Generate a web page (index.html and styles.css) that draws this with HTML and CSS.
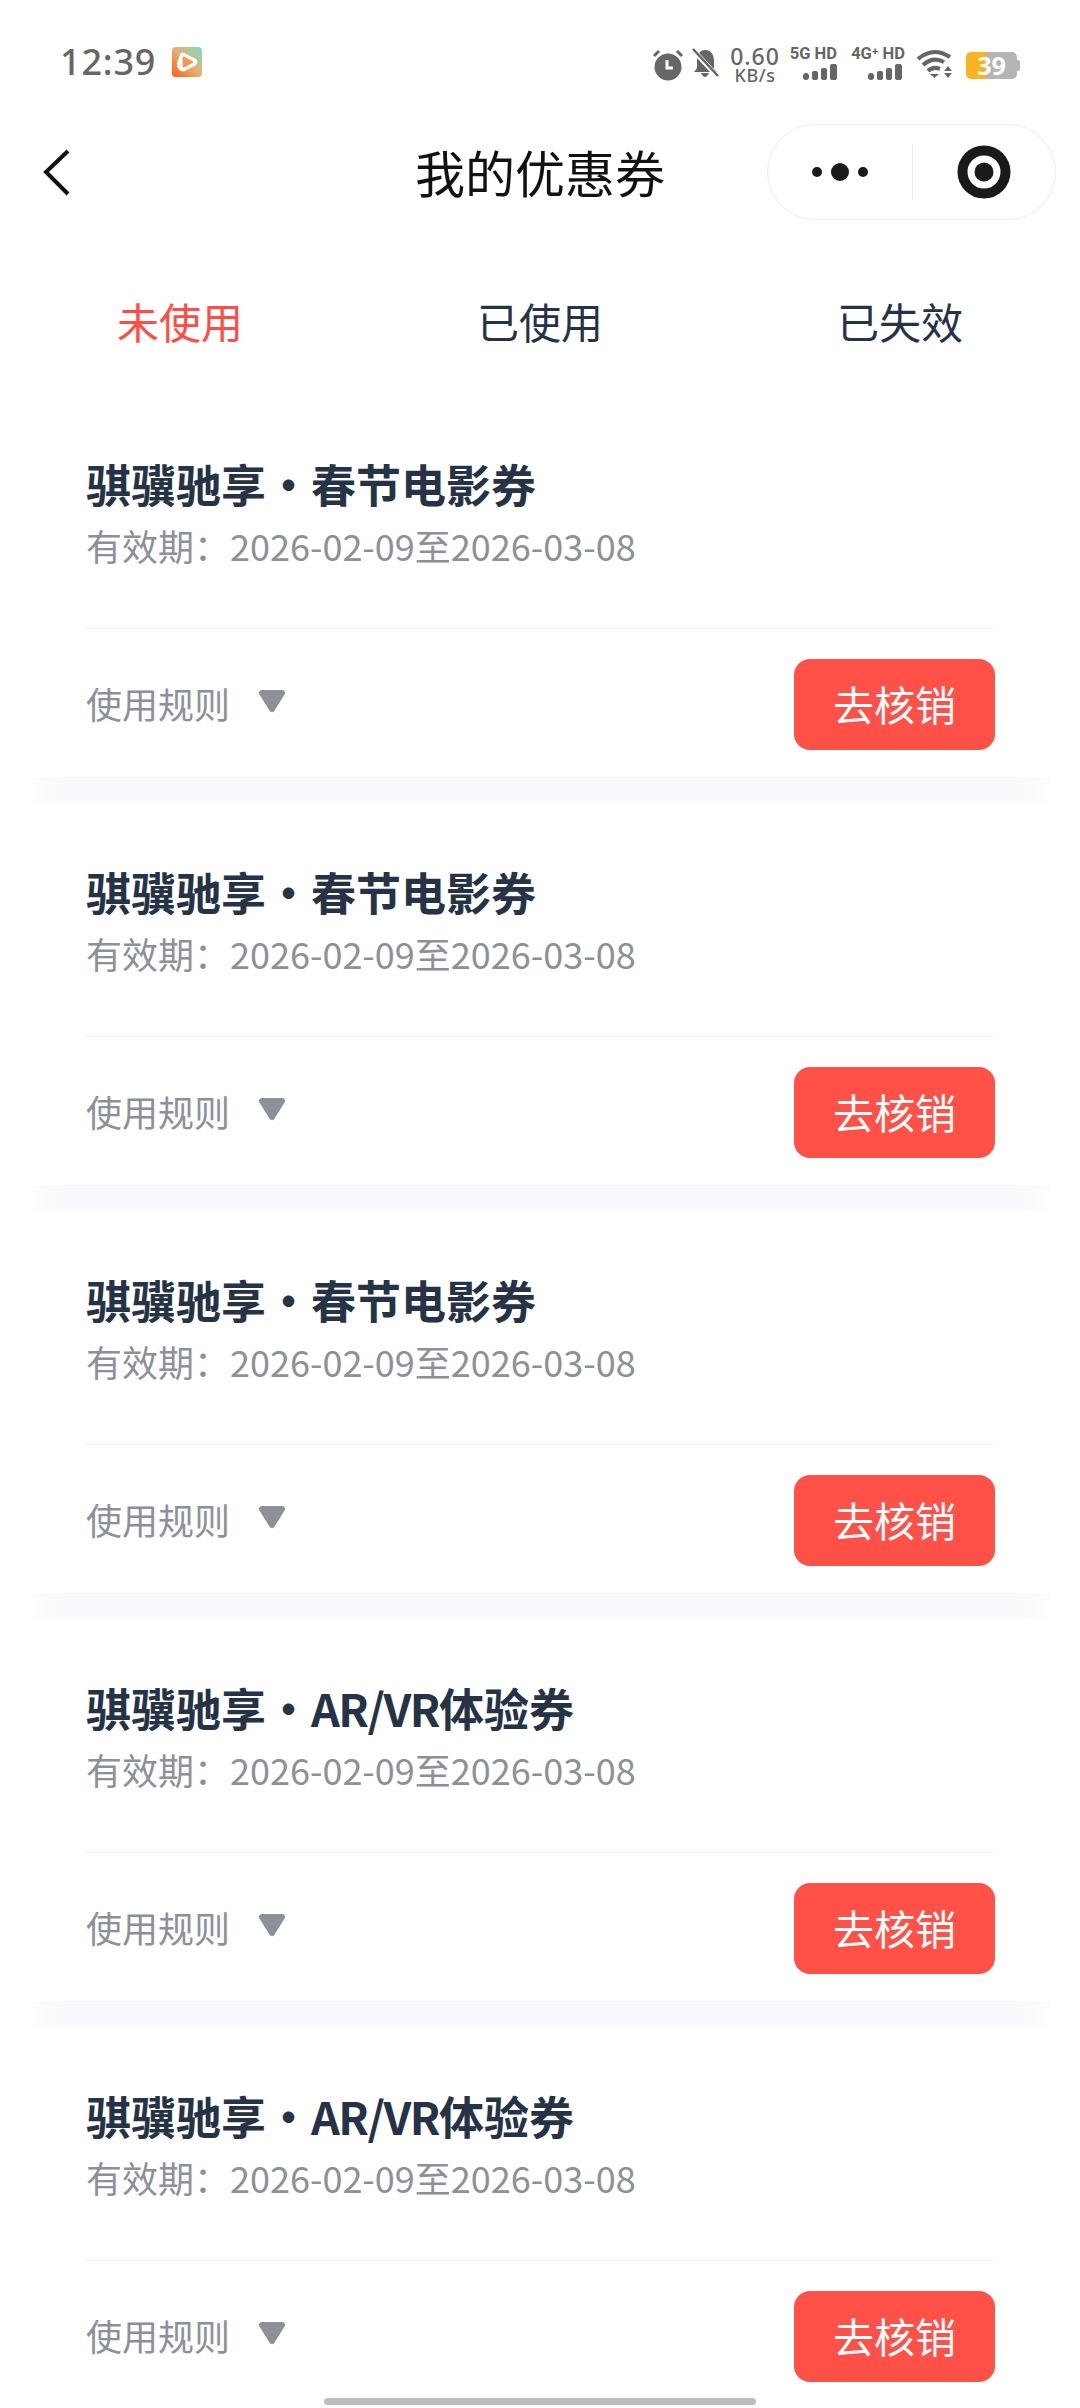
FILE: index.html
```html
<!DOCTYPE html>
<html lang="zh-CN">
<head>
    <meta charset="UTF-8">
    <meta name="viewport" content="width=device-width, initial-scale=1.0">
    <title>我的优惠券</title>
    <link rel="stylesheet" href="styles.css">
</head>
<body>
    <div class="page">
        <div class="status">
            <div class="status-left">
                <span class="time">12:39</span>
                <svg class="app-icon" width="30" height="30" viewBox="0 0 30 30">
                    <defs>
                        <linearGradient id="appBg" x1="1" y1="0" x2="0" y2="1">
                            <stop offset="0" stop-color="#6fe0c8"/>
                            <stop offset="0.5" stop-color="#e8b070"/>
                            <stop offset="1" stop-color="#ff5a10"/>
                        </linearGradient>
                    </defs>
                    <rect width="30" height="30" rx="4" fill="url(#appBg)"/>
                    <path d="M8 8 Q8 5 11 5.500 L24 12 Q27 15 24 18 L12 24.500 Q5 25 5 16 Z" fill="#fff"/>
                    <path d="M11.500 10.500 L20 15 L11.500 19.500 Z" fill="#f09a50" stroke="#f09a50" stroke-width="2" stroke-linejoin="round"/>
                </svg>
            </div>
            <div class="status-right">
                <svg class="alarm" width="30" height="32" viewBox="0 0 30 32">
                    <circle cx="15" cy="18" r="13.500" fill="#666"/>
                    <path d="M14 11 V19 H20" fill="none" stroke="#fff" stroke-width="3"/>
                    <path d="M1 7 L6 2 M29 7 L24 2" stroke="#666" stroke-width="3"/>
                </svg>
                <svg class="bell" width="28" height="30" viewBox="0 0 28 30">
                    <path d="M14 2 C21 2 23 8 23 13 V21 L26 24 H3 L6 20 V10 C7 5 10 2 14 2 Z M10 25 H18 Q16 29 14 29 Q12 29 10 25 Z" fill="#666"/>
                    <path d="M1 1 L27 29" stroke="#fff" stroke-width="5"/>
                    <path d="M2 1 L27 28" stroke="#666" stroke-width="2.500"/>
                </svg>
                <div class="speed">
                    <span class="speed-num">0.60</span>
                    <span class="speed-unit">KB/s</span>
                </div>
                <div class="net net-5g">
                    <span class="net-label">5G HD</span>
                    <svg width="34" height="17" viewBox="0 0 34 17">
                        <rect x="0" y="9" width="6" height="7" rx="3" fill="#666"/>
                        <rect x="9" y="7" width="6" height="9" rx="2" fill="#666"/>
                        <rect x="18" y="4" width="6" height="12" rx="2" fill="#666"/>
                        <rect x="27" y="0" width="7" height="16" rx="2" fill="#666"/>
                    </svg>
                </div>
                <div class="net net-4g">
                    <span class="net-label">4G⁺ HD</span>
                    <svg width="34" height="17" viewBox="0 0 34 17">
                        <rect x="0" y="9" width="6" height="7" rx="3" fill="#666"/>
                        <rect x="9" y="7" width="6" height="9" rx="2" fill="#666"/>
                        <rect x="18" y="4" width="6" height="12" rx="2" fill="#666"/>
                        <rect x="27" y="0" width="7" height="16" rx="2" fill="#666"/>
                    </svg>
                </div>
                <svg class="wifi" width="38" height="30" viewBox="0 0 38 30">
                    <path d="M2 10 Q17 -3 34 8" fill="none" stroke="#666" stroke-width="4"/>
                    <path d="M7 16 Q17 7 28 13" fill="none" stroke="#666" stroke-width="4"/>
                    <path d="M12 22 Q17 17 24 20" fill="none" stroke="#666" stroke-width="4"/>
                    <path d="M14 25 H23 L18.500 29 Z" fill="#666"/>
                    <path d="M32 17 L36 22 H28 Z M28 24 H36 L32 29 Z" fill="#666"/>
                </svg>
                <div class="battery">
                    <div class="battery-body"><span class="battery-num">39</span></div>
                    <div class="battery-tip"></div>
                </div>
            </div>
        </div>

        <div class="nav">
            <svg class="back" width="28" height="48" viewBox="0 0 28 48">
                <path d="M25 3 L3 24 L25 46" fill="none" stroke="#111" stroke-width="4"/>
            </svg>
            <div class="nav-title">我的优惠券</div>
            <div class="capsule">
                <div class="capsule-part capsule-more">
                    <svg width="60" height="24" viewBox="0 0 60 24">
                        <circle cx="7" cy="12" r="5" fill="#1a1a1a"/>
                        <circle cx="30" cy="12" r="9" fill="#1a1a1a"/>
                        <circle cx="53" cy="12" r="5" fill="#1a1a1a"/>
                    </svg>
                </div>
                <div class="capsule-part capsule-close">
                    <svg width="54" height="54" viewBox="0 0 54 54">
                        <circle cx="27" cy="27" r="21.500" fill="none" stroke="#1a1a1a" stroke-width="10"/>
                        <circle cx="27" cy="27" r="9.500" fill="#1a1a1a"/>
                    </svg>
                </div>
            </div>
        </div>

        <div class="tabs">
            <div class="tab active">未使用</div>
            <div class="tab">已使用</div>
            <div class="tab">已失效</div>
        </div>

        <div class="card">
            <div class="card-title">骐骥驰享・春节电影券</div>
            <div class="card-date">有效期：2026-02-09至2026-03-08</div>
            <div class="card-foot">
                <div class="rule">使用规则
                    <svg class="arrow" width="28" height="24" viewBox="0 0 28 24"><path d="M4 4 H24 L14 20 Z" fill="#8e9099" stroke="#8e9099" stroke-width="6" stroke-linejoin="round"/></svg>
                </div>
                <button class="use-btn">去核销</button>
            </div>
        </div>
        <div class="card">
            <div class="card-title">骐骥驰享・春节电影券</div>
            <div class="card-date">有效期：2026-02-09至2026-03-08</div>
            <div class="card-foot">
                <div class="rule">使用规则
                    <svg class="arrow" width="28" height="24" viewBox="0 0 28 24"><path d="M4 4 H24 L14 20 Z" fill="#8e9099" stroke="#8e9099" stroke-width="6" stroke-linejoin="round"/></svg>
                </div>
                <button class="use-btn">去核销</button>
            </div>
        </div>
        <div class="card">
            <div class="card-title">骐骥驰享・春节电影券</div>
            <div class="card-date">有效期：2026-02-09至2026-03-08</div>
            <div class="card-foot">
                <div class="rule">使用规则
                    <svg class="arrow" width="28" height="24" viewBox="0 0 28 24"><path d="M4 4 H24 L14 20 Z" fill="#8e9099" stroke="#8e9099" stroke-width="6" stroke-linejoin="round"/></svg>
                </div>
                <button class="use-btn">去核销</button>
            </div>
        </div>
        <div class="card">
            <div class="card-title">骐骥驰享・<span class="latin">AR/VR</span>体验券</div>
            <div class="card-date">有效期：2026-02-09至2026-03-08</div>
            <div class="card-foot">
                <div class="rule">使用规则
                    <svg class="arrow" width="28" height="24" viewBox="0 0 28 24"><path d="M4 4 H24 L14 20 Z" fill="#8e9099" stroke="#8e9099" stroke-width="6" stroke-linejoin="round"/></svg>
                </div>
                <button class="use-btn">去核销</button>
            </div>
        </div>
        <div class="card">
            <div class="card-title">骐骥驰享・<span class="latin">AR/VR</span>体验券</div>
            <div class="card-date">有效期：2026-02-09至2026-03-08</div>
            <div class="card-foot">
                <div class="rule">使用规则
                    <svg class="arrow" width="28" height="24" viewBox="0 0 28 24"><path d="M4 4 H24 L14 20 Z" fill="#8e9099" stroke="#8e9099" stroke-width="6" stroke-linejoin="round"/></svg>
                </div>
                <button class="use-btn">去核销</button>
            </div>
        </div>

        <div class="home-bar"></div>
    </div>
</body>
</html>
```

FILE: styles.css
```css
html, body {
    margin: 0;
    padding: 0;
    background: #fff;
}
.page {
    position: relative;
    width: 1080px;
    height: 2408px;
    overflow: hidden;
    font-family: "Noto Sans CJK SC", "Noto Sans", sans-serif;
}

/* status bar */
.status {
    height: 124px;
    box-sizing: border-box;
    padding: 44px 60px 0 60px;
    display: flex;
    justify-content: space-between;
    align-items: flex-start;
    color: #666;
}
.status-left {
    display: flex;
    align-items: center;
    height: 36px;
}
.time {
    font-family: "Noto Sans", sans-serif;
    font-size: 36px;
    font-weight: 500;
    line-height: 36px;
    letter-spacing: 0.8px;
}
.app-icon {
    margin-left: 16px;
}
.status-right {
    display: flex;
    align-items: flex-start;
}
.alarm {
    margin-top: 5px;
}
.bell {
    margin-left: 8px;
    margin-top: 4px;
}
.speed {
    margin-left: 12px;
    width: 48px;
    display: flex;
    flex-direction: column;
    align-items: center;
    font-family: "Noto Sans", sans-serif;
    margin-top: 1px;
}
.speed-num {
    font-size: 23px;
    font-weight: 500;
    line-height: 22px;
    letter-spacing: 1px;
}
.speed-unit {
    font-size: 18px;
    font-weight: 500;
    line-height: 16px;
    letter-spacing: 0.5px;
}
.net {
    display: flex;
    flex-direction: column;
    align-items: flex-end;
    margin-top: 2px;
}
.net-5g {
    margin-left: 12px;
    width: 46px;
}
.net-4g {
    margin-left: 11px;
    width: 57px;
}
.net-4g svg {
    margin-right: 3px;
}
.net-label {
    font-family: "Roboto", sans-serif;
    font-size: 16.500px;
    font-weight: 700;
    line-height: 16px;
    white-space: nowrap;
    margin-bottom: 2px;
}
.wifi {
    margin-left: 11px;
    margin-top: 5px;
}
.battery {
    margin-left: 12px;
    margin-top: 8px;
    display: flex;
    align-items: center;
}
.battery-body {
    width: 51px;
    height: 27px;
    border-radius: 5px;
    background: linear-gradient(to right, #fcb321 0, #fcb321 40%, #b5b5b5 40%, #b5b5b5 100%);
    text-align: center;
}
.battery-num {
    font-family: "Noto Sans", sans-serif;
    font-size: 25px;
    font-weight: 700;
    line-height: 27px;
    color: #fff;
    display: block;
}
.battery-tip {
    width: 3px;
    height: 11px;
    background: #b5b5b5;
    border-radius: 0 2px 2px 0;
}

/* nav */
.nav {
    position: relative;
    height: 96px;
    display: flex;
    justify-content: center;
    align-items: center;
}
.back {
    position: absolute;
    left: 43px;
    top: 24px;
}
.nav-title {
    font-size: 50px;
    line-height: 96px;
    color: #111;
    padding-bottom: 3px;
}
.capsule {
    position: absolute;
    left: 767px;
    top: 0;
    width: 289px;
    height: 96px;
    box-sizing: border-box;
    border: 1.500px solid #eeeeee;
    border-radius: 48px;
    display: flex;
    align-items: center;
}
.capsule-part {
    display: flex;
    justify-content: center;
    align-items: center;
    height: 56px;
}
.capsule-more {
    width: 144px;
    border-right: 1.500px solid #eeeeee;
}
.capsule-close {
    flex: 1;
}

/* tabs */
.tabs {
    display: flex;
    padding: 61px 0 34px 0;
}
.tab {
    flex: 1;
    text-align: center;
    font-size: 42px;
    line-height: 80px;
    color: #263347;
}
.tab.active {
    color: #ff4d45;
}

/* coupon cards */
.card {
    margin: 0 30px;
    height: 408px;
    box-sizing: border-box;
    padding: 59px 55px 0 56px;
    background: linear-gradient(to right, #fdfdfe 0, #f8f9fc 40px, #f8f9fc 980px, #fdfdfe 100%) left 382px / 100% 26px no-repeat;
}
.card-title {
    font-size: 45px;
    font-weight: 700;
    line-height: 60px;
    color: #263347;
}
.latin {
    letter-spacing: -1.500px;
}
.card-date {
    margin-top: 6px;
    font-size: 36px;
    line-height: 50px;
    color: #8e9099;
}
.card-foot {
    margin-top: 58px;
    height: 148px;
    box-sizing: border-box;
    padding: 30px 0 27px 0;
    border-top: 1.500px solid #f2f3f5;
    display: flex;
    justify-content: space-between;
    align-items: center;
}
.rule {
    display: flex;
    align-items: center;
    font-size: 36px;
    line-height: 50px;
    color: #8e9099;
    padding-bottom: 2px;
}
.arrow {
    margin-left: 28px;
    margin-top: -4px;
}
.use-btn {
    width: 201px;
    height: 91px;
    border: none;
    padding: 0 0 2px 0;
    border-radius: 16px;
    background: #ff5148;
    color: #fff;
    font-family: "Noto Sans CJK SC", "Noto Sans", sans-serif;
    font-size: 41px;
}

.home-bar {
    position: absolute;
    left: 324px;
    bottom: 3px;
    width: 432px;
    height: 7px;
    border-radius: 4px;
    background: #bdbdbd;
}
```
